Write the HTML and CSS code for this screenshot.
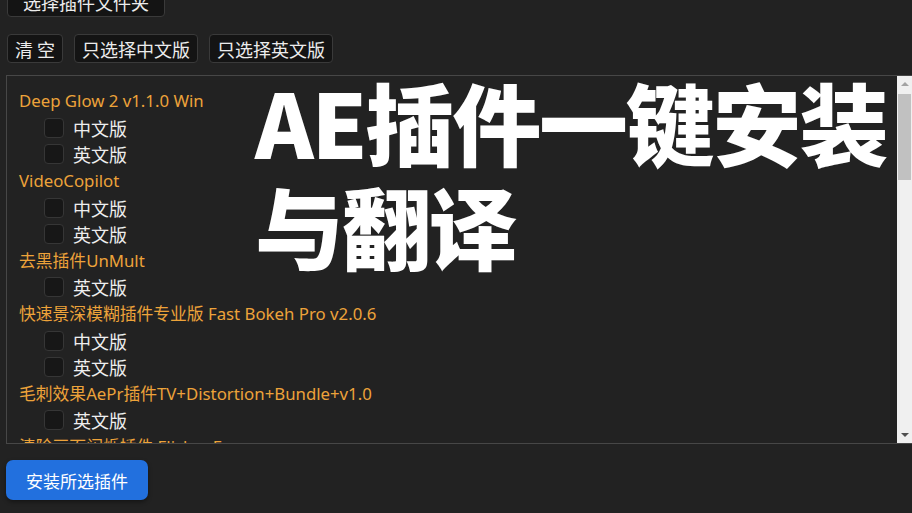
FILE: index.html
```html
<!DOCTYPE html>
<html lang="zh">
<head>
    <meta charset="UTF-8">
    <meta name="viewport" content="width=device-width, initial-scale=1.0">
    <title>AE插件安装</title>
    <link rel="stylesheet" href="styles.css">
</head>
<body>
    <div class="installer">
        <button class="tool-button folder-button">选择插件文件夹</button>
        <div class="toolbar">
            <button class="tool-button">清 空</button>
            <button class="tool-button">只选择中文版</button>
            <button class="tool-button">只选择英文版</button>
        </div>

        <div class="plugin-box">
            <div class="plugin-list">
                <div class="plugin-name">Deep Glow 2 v1.1.0 Win</div>
                <label class="option"><span class="check"></span>中文版</label>
                <label class="option"><span class="check"></span>英文版</label>
                <div class="plugin-name">VideoCopilot</div>
                <label class="option"><span class="check"></span>中文版</label>
                <label class="option"><span class="check"></span>英文版</label>
                <div class="plugin-name">去黑插件UnMult</div>
                <label class="option"><span class="check"></span>英文版</label>
                <div class="plugin-name">快速景深模糊插件专业版 Fast Bokeh Pro v2.0.6</div>
                <label class="option"><span class="check"></span>中文版</label>
                <label class="option"><span class="check"></span>英文版</label>
                <div class="plugin-name">毛刺效果AePr插件TV+Distortion+Bundle+v1.0</div>
                <label class="option"><span class="check"></span>英文版</label>
                <div class="plugin-name">清除画面闪烁插件 Flicker Free</div>
                <label class="option"><span class="check"></span>中文版</label>
            </div>
            <div class="scrollbar">
                <span class="arrow up"></span>
                <div class="track"><div class="thumb"></div></div>
                <span class="arrow down"></span>
            </div>
        </div>

        <button class="install-button">安装所选插件</button>

        <!-- 标题叠加文字 -->
        <h1 class="headline">AE插件一键安装<br>与翻译</h1>
    </div>
</body>
</html>
```

FILE: styles.css
```css
body {
    margin: 0;
    background-color: #222222;
    font-family: "Noto Sans", "Noto Sans CJK SC", sans-serif;
    overflow: hidden;
}
.installer {
    position: relative;
    height: 513px;
    padding: 0 0 0 6px;
    display: flex;
    flex-direction: column;
    align-items: flex-start;
}
.tool-button {
    background-color: #141414;
    color: #ececec;
    border: 1px solid #3a3a3a;
    border-radius: 4px;
    font-family: "Noto Sans CJK SC", sans-serif;
    font-size: 18px;
    line-height: 26px;
    padding: 0 7px;
    height: 29px;
}
.folder-button {
    margin-top: -14px;
    margin-left: 1px;
    height: 31px;
    width: 158px;
}
.toolbar {
    display: flex;
    gap: 11px;
    margin-top: 17px;
    margin-left: 1px;
}
.toolbar .tool-button:first-child {
    padding: 0 7px;
}
.plugin-box {
    margin-top: 12px;
    width: 906px;
    height: 369px;
    box-sizing: border-box;
    border: 1px solid #474747;
    border-right: none;
    display: flex;
    overflow: hidden;
}
.plugin-list {
    flex: 1;
    padding: 12px 0 0 12px;
    overflow: hidden;
}
.plugin-name {
    color: #eda33a;
    font-size: 16.8px;
    line-height: 26.6px;
    height: 26.6px;
    white-space: nowrap;
}
.option {
    display: flex;
    align-items: center;
    height: 26.6px;
    padding-left: 25px;
    color: #eeeeee;
    font-family: "Noto Sans CJK SC", sans-serif;
    font-size: 18px;
}
.check {
    width: 18px;
    height: 18px;
    margin-right: 9px;
    border: 1px solid #363636;
    border-radius: 4px;
    background-color: #171717;
}
.scrollbar {
    width: 15px;
    background-color: #f0f0f0;
    display: flex;
    flex-direction: column;
    align-items: center;
}
.arrow {
    width: 0;
    height: 0;
    border-left: 4px solid transparent;
    border-right: 4px solid transparent;
    margin: 6px 0;
}
.arrow.up {
    border-bottom: 4px solid #a3a3a3;
}
.arrow.down {
    border-top: 4px solid #505050;
}
.track {
    flex: 1;
    width: 100%;
}
.thumb {
    margin: 2px 1px 0;
    height: 86px;
    background-color: #c1c1c1;
}
.install-button {
    margin-top: 16px;
    width: 142px;
    height: 40px;
    background-color: #2270de;
    color: #ffffff;
    border: none;
    border-radius: 7px;
    font-family: "Noto Sans CJK SC", sans-serif;
    font-size: 17px;
    box-shadow: 0 2px 4px rgba(0, 0, 0, 0.4);
}
.headline {
    position: absolute;
    left: 255px;
    top: 69px;
    margin: 0;
    color: #ffffff;
    font-family: "Noto Sans CJK SC", sans-serif;
    font-weight: 900;
    font-size: 89px;
    line-height: 104px;
    letter-spacing: -2.2px;
}
```
